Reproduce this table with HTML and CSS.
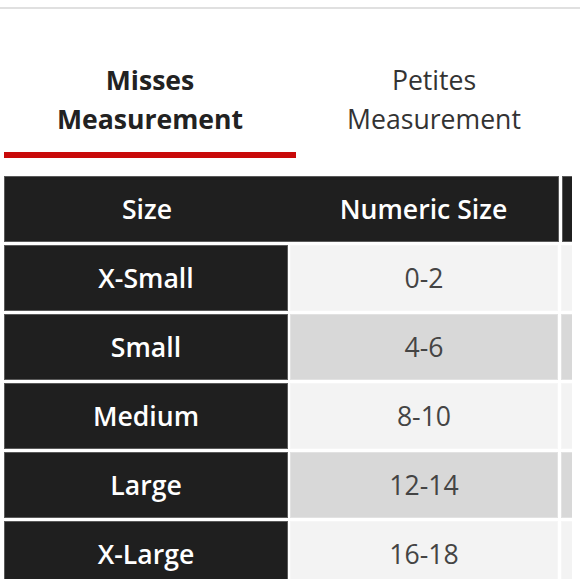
FILE: index.html
```html
<!DOCTYPE html>
<html lang="en">
<head>
<meta charset="utf-8">
<title>Size Chart</title>
<link rel="stylesheet" href="styles.css">
</head>
<body>
<div class="topline"></div>
<div class="tabs">
  <div class="tab active">Misses<br>Measurement</div>
  <div class="tab">Petites<br>Measurement</div>
</div>
<div class="table-wrap">
  <div class="row head">
    <div class="cell c1">Size</div>
    <div class="cell c2">Numeric Size</div>
    <div class="cell c3"></div>
  </div>
  <div class="row odd">
    <div class="cell c1">X-Small</div>
    <div class="cell c2">0-2</div>
    <div class="cell c3"></div>
  </div>
  <div class="row even">
    <div class="cell c1">Small</div>
    <div class="cell c2">4-6</div>
    <div class="cell c3"></div>
  </div>
  <div class="row odd">
    <div class="cell c1">Medium</div>
    <div class="cell c2">8-10</div>
    <div class="cell c3"></div>
  </div>
  <div class="row even">
    <div class="cell c1">Large</div>
    <div class="cell c2">12-14</div>
    <div class="cell c3"></div>
  </div>
  <div class="row odd">
    <div class="cell c1">X-Large</div>
    <div class="cell c2">16-18</div>
    <div class="cell c3"></div>
  </div>
</div>
</body>
</html>
```
FILE: styles.css
```css
html, body {
  margin: 0;
  padding: 0;
  background: #fff;
  font-family: "Open Sans", "Noto Sans", sans-serif;
  overflow: hidden;
}
.topline {
  height: 7px;
  border-bottom: 2px solid #e0e0e0;
}
.tabs {
  display: flex;
  margin: 52px 0 0 4px;
  width: 568px;
}
.tab {
  font-size: 26.6px;
  line-height: 39px;
  text-align: center;
  color: #333;
  padding-bottom: 13px;
  border-bottom: 6px solid transparent;
}
.tab:first-child {
  width: 292px;
}
.tab:last-child {
  flex: 1;
}
.tab.active {
  font-weight: 700;
  color: #222;
  border-bottom-color: #c80a0a;
}
.table-wrap {
  margin: 18px 0 0 4px;
  width: 568px;
  overflow: hidden;
  display: flex;
  flex-direction: column;
  gap: 3px;
}
.row {
  display: flex;
  height: 66px;
  gap: 3px;
}
.row .c1 { width: 284px; margin-right: -1px; }
.row .c2 { width: 268px; }
.row .c3 { width: 40px; flex-shrink: 0; }
.cell {
  display: flex;
  align-items: center;
  justify-content: center;
  font-size: 26.6px;
  box-sizing: border-box;
  flex-shrink: 0;
}
.c1 {
  background: #1f1f1f;
  color: #fff;
  font-weight: 600;
  border: 1px solid #5a5a5a;
}
.head .cell {
  background: #1f1f1f;
  color: #fff;
  font-weight: 600;
  border: 1px solid #5a5a5a;
}
.head .c1 { width: 285px; border-right: 0; margin-right: -3px; }
.head .c2 { width: 270px; border-left: 0; }
.c2, .c3 {
  color: #444;
}
.odd .c2, .odd .c3 {
  background: #f3f3f3;
  border: 1px solid #f6f6f6;
}
.even .c2, .even .c3 {
  background: #d8d8d8;
  border: 1px solid #e2e2e2;
}
```
